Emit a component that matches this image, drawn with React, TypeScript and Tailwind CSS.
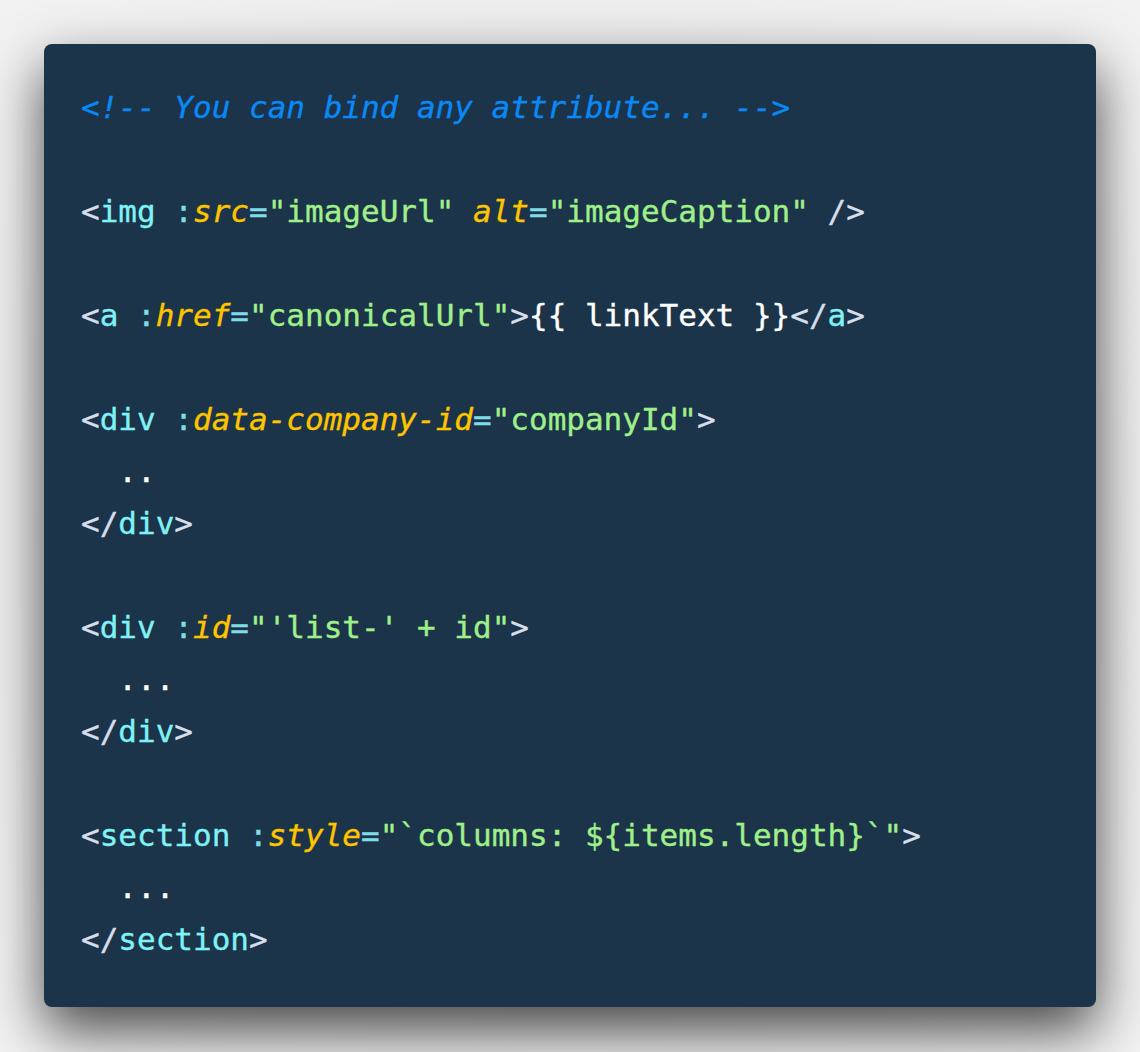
type Tok = { t: string; c: string };

const P = 'text-[#d6deeb]';
const TAG = 'text-[#80f2f6]';
const ATTR = 'text-[#ffc400] italic';
const EQ = 'text-[#80dde8]';
const STR = 'text-[#a0f08a]';
const TXT = 'text-white';
const CMT = 'text-[#0a88f5] italic';

const lines: Tok[][] = [
  [{ t: '<!-- You can bind any attribute... -->', c: CMT }],
  [],
  [
    { t: '<', c: P },
    { t: 'img', c: TAG },
    { t: ' :', c: EQ },
    { t: 'src', c: ATTR },
    { t: '=', c: EQ },
    { t: '"imageUrl"', c: STR },
    { t: ' ', c: P },
    { t: 'alt', c: ATTR },
    { t: '=', c: EQ },
    { t: '"imageCaption"', c: STR },
    { t: ' />', c: P },
  ],
  [],
  [
    { t: '<', c: P },
    { t: 'a', c: TAG },
    { t: ' :', c: EQ },
    { t: 'href', c: ATTR },
    { t: '=', c: EQ },
    { t: '"canonicalUrl"', c: STR },
    { t: '>', c: P },
    { t: '{{ linkText }}', c: TXT },
    { t: '</', c: P },
    { t: 'a', c: TAG },
    { t: '>', c: P },
  ],
  [],
  [
    { t: '<', c: P },
    { t: 'div', c: TAG },
    { t: ' :', c: EQ },
    { t: 'data-company-id', c: ATTR },
    { t: '=', c: EQ },
    { t: '"companyId"', c: STR },
    { t: '>', c: P },
  ],
  [{ t: '  ..', c: TXT }],
  [
    { t: '</', c: P },
    { t: 'div', c: TAG },
    { t: '>', c: P },
  ],
  [],
  [
    { t: '<', c: P },
    { t: 'div', c: TAG },
    { t: ' :', c: EQ },
    { t: 'id', c: ATTR },
    { t: '=', c: EQ },
    { t: '"\'list-\' + id"', c: STR },
    { t: '>', c: P },
  ],
  [{ t: '  ...', c: TXT }],
  [
    { t: '</', c: P },
    { t: 'div', c: TAG },
    { t: '>', c: P },
  ],
  [],
  [
    { t: '<', c: P },
    { t: 'section', c: TAG },
    { t: ' :', c: EQ },
    { t: 'style', c: ATTR },
    { t: '=', c: EQ },
    { t: '"`columns: ${items.length}`"', c: STR },
    { t: '>', c: P },
  ],
  [{ t: '  ...', c: TXT }],
  [
    { t: '</', c: P },
    { t: 'section', c: TAG },
    { t: '>', c: P },
  ],
];

const App = () => {
  return (
    <div className="min-h-screen bg-[radial-gradient(ellipse_at_center,#d8d8d8_0%,#eeeeee_70%,#f2f2f2_100%)] p-[44px] pb-[45px]">
      <div className="rounded-lg bg-[#1b3449] pt-[37px] pb-[42px] pl-[37px] pr-8 shadow-[0_24px_55px_rgba(0,0,0,0.7)]">
        <pre className="font-['DejaVu_Sans_Mono',monospace] text-[31px] leading-[52px] [-webkit-text-stroke:0.35px_currentColor]">
          {lines.map((line, i) => (
            <div key={i} className="h-[52px] whitespace-pre">
              {line.map((tok, j) => (
                <span key={j} className={tok.c}>
                  {tok.t}
                </span>
              ))}
            </div>
          ))}
        </pre>
      </div>
    </div>
  );
};

export default App;
